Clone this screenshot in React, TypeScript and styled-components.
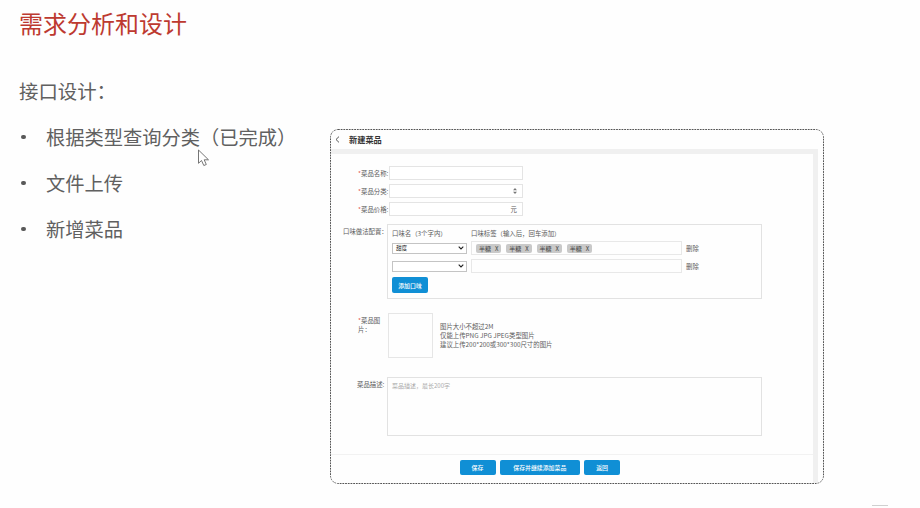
import React from 'react';
import styled, { createGlobalStyle } from 'styled-components';

const GlobalStyle = createGlobalStyle`
  * { box-sizing: border-box; }
  body {
    margin: 0;
    background: #fefefe;
    font-family: "Noto Sans CJK SC", sans-serif;
    overflow: hidden;
  }
`;

const Slide = styled.div`
  position: relative;
  display: flex;
  width: 920px;
  height: 508px;
  overflow: hidden;
`;

const Outline = styled.section`
  width: 330px;
  flex: none;
  padding: 5px 0 0 19px;
  color: #606060;
  white-space: nowrap;
`;

const Title = styled.h1`
  margin: 0;
  font-size: 24px;
  line-height: 36px;
  font-weight: 400;
  color: #bd3a30;
`;

const Lead = styled.p`
  margin: 27px 0 0;
  font-size: 19.4px;
  line-height: 46px;
`;

const Topics = styled.ul`
  margin: 0;
  padding: 0;
  list-style: none;
`;

const Topic = styled.li`
  display: flex;
  align-items: center;
  gap: 20.5px;
  font-size: 19.25px;
  line-height: 46px;
  &::before {
    content: "";
    width: 4.5px;
    height: 4.5px;
    margin-left: 2px;
    border-radius: 50%;
    background: #595959;
  }
`;

const Panel = styled.section`
  position: relative;
  display: flex;
  flex-direction: column;
  width: 494px;
  height: 355px;
  margin-top: 129px;
  padding: 1px;
  border-radius: 8px;
  font-size: 6.4px;
  line-height: 9px;
  color: #5c5c5c;
  white-space: nowrap;
  overflow: hidden;
`;

const DashedOutline = styled.svg`
  position: absolute;
  inset: 0;
  pointer-events: none;
`;

const PanelHeader = styled.header`
  display: flex;
  align-items: center;
  gap: 9px;
  height: 19px;
  padding-left: 4px;
  font-size: 8.2px;
  font-weight: 700;
  color: #333;
`;

const Content = styled.div`
  flex: 1;
  width: 487px;
  border-top: 5px solid #f0f0f0;
  border-right: 5px solid #f0f0f0;
`;

const Form = styled.form`
  height: 301px;
  padding-top: 12px;
  border-bottom: 1px solid #f2f2f2;
`;

const Field = styled.div<{ $top?: number }>`
  display: flex;
  align-items: flex-start;
  margin-top: ${p => p.$top ?? 4}px;
`;

const Label = styled.label<{ $width: number; $indent: number; $top?: number }>`
  width: ${p => p.$width}px;
  flex: none;
  padding: ${p => p.$top ?? 3}px 0 0 ${p => p.$indent}px;
`;

const Star = styled.span`
  color: #e2574c;
`;

const Control = styled.div`
  display: flex;
  align-items: center;
  justify-content: flex-end;
  width: 134px;
  height: 14px;
  padding-right: 5px;
  border: 1px solid #e4e4e4;
  background: #fff;
`;

const FlavourBox = styled.div`
  width: 375px;
  height: 75px;
  padding: 4px 0 0 4px;
  border: 1px solid #e2e2e2;
`;

const FlavourRow = styled.div<{ $height: number }>`
  display: grid;
  grid-template-columns: 75px 211px 30px;
  column-gap: 4px;
  align-items: center;
  height: ${p => p.$height}px;
`;

const Select = styled.div`
  display: flex;
  align-items: center;
  justify-content: space-between;
  height: 11px;
  padding: 0 2px 0 3px;
  border: 1px solid #c4c4c4;
  font-size: 5.6px;
  color: #222;
  background: #fff;
`;

const TagInput = styled.div`
  display: flex;
  align-items: center;
  gap: 5px;
  height: 14px;
  padding-left: 4px;
  border: 1px solid #e8e8e8;
`;

const Tag = styled.span`
  display: flex;
  align-items: center;
  justify-content: center;
  gap: 4px;
  width: 25.3px;
  height: 9px;
  border-radius: 2px;
  background: #c9c9c9;
  font-size: 6px;
  color: #444;
`;

const Button = styled.button<{ $width: number }>`
  display: block;
  width: ${p => p.$width}px;
  height: 15.5px;
  padding: 0;
  border: 0;
  border-radius: 2px;
  background: #108fd5;
  color: #fff;
  font: 500 5.9px/15px "Noto Sans CJK SC", sans-serif;
`;

const AddFlavour = styled(Button)`
  margin-top: 3.4px;
`;

const Upload = styled.div`
  width: 45px;
  height: 45px;
  margin-left: 1px;
  border: 1px solid #e6e6e6;
`;

const Hints = styled.p`
  margin: 10px 0 0 7px;
  line-height: 8.9px;
`;

const Textarea = styled.div`
  width: 375px;
  height: 59px;
  padding: 3px 4px;
  border: 1px solid #e2e2e2;
  font-size: 6px;
  color: #aaa;
`;

const Footer = styled.footer`
  display: flex;
  gap: 4.3px;
  padding: 4.5px 0 0 128.5px;
`;

const Pointer = styled.svg`
  position: absolute;
  left: 197px;
  top: 149px;
`;

const CornerMark = styled.div`
  position: absolute;
  left: 872px;
  top: 505px;
  width: 16px;
  height: 1px;
  background: #d0d0d0;
`;

const Chevron = () => (
  <svg width="6" height="4" viewBox="0 0 6 4" fill="none" stroke="#222" strokeWidth="1.1">
    <path d="M.7.6 3 3 5.3.6" />
  </svg>
);

const topics = ['根据类型查询分类（已完成）', '文件上传', '新增菜品'];
const fields = [
  { label: '菜品名称:', suffix: null },
  {
    label: '菜品分类:',
    suffix: (
      <svg width="4" height="6" viewBox="0 0 4 6" fill="#777">
        <path d="M2 0 4 2.3H0zM2 6 4 3.7H0z" />
      </svg>
    ),
  },
  { label: '菜品价格:', suffix: '元' },
];
const flavours = [
  { name: '甜度', tags: ['半糖', '半糖', '半糖', '半糖'] },
  { name: '', tags: [] as string[] },
];

export default function App() {
  return (
    <>
      <GlobalStyle />
      <Slide>
        <Outline>
          <Title>需求分析和设计</Title>
          <Lead>接口设计：</Lead>
          <Topics>
            {topics.map(t => <Topic key={t}>{t}</Topic>)}
          </Topics>
        </Outline>
        <Panel>
          <PanelHeader>
            <svg width="5" height="7" viewBox="0 0 5 7" fill="none" stroke="#444" strokeWidth=".9">
              <path d="M4 .6 1 3.5l3 2.9" />
            </svg>
            新建菜品
          </PanelHeader>
          <Content>
            <Form>
              {fields.map((f, i) => (
                <Field key={f.label} $top={i ? 4 : 0}>
                  <Label $width={58} $indent={27}><Star>*</Star>{f.label}</Label>
                  <Control>{f.suffix}</Control>
                </Field>
              ))}
              <Field $top={8}>
                <Label $width={56} $indent={12}>口味做法配置：</Label>
                <FlavourBox>
                  <FlavourRow $height={9}>
                    <span>口味名（3个字内）</span>
                    <span>口味标签（输入后，回车添加）</span>
                  </FlavourRow>
                  {flavours.map((f, i) => (
                    <FlavourRow key={i} $height={i ? 16 : 20}>
                      <Select>{f.name || <span />}<Chevron /></Select>
                      <TagInput>
                        {f.tags.map((t, n) => <Tag key={n}>{t}<span>X</span></Tag>)}
                      </TagInput>
                      <span>删除</span>
                    </FlavourRow>
                  ))}
                  <AddFlavour type="button" $width={36}>添加口味</AddFlavour>
                </FlavourBox>
              </Field>
              <Field $top={14}>
                <Label $width={56} $indent={27}><Star>*</Star>菜品图<br />片：</Label>
                <Upload />
                <Hints>
                  图片大小不超过2M<br />
                  仅能上传PNG JPG JPEG类型图片<br />
                  建议上传200*200或300*300尺寸的图片
                </Hints>
              </Field>
              <Field $top={19}>
                <Label $width={56} $indent={26}>菜品描述:</Label>
                <Textarea>菜品描述，最长200字</Textarea>
              </Field>
            </Form>
            <Footer>
              <Button $width={36}>保存</Button>
              <Button $width={80}>保存并继续添加菜品</Button>
              <Button $width={36}>返回</Button>
            </Footer>
          </Content>
          <DashedOutline width="494" height="355" fill="none" stroke="#555">
            <rect x=".5" y=".5" width="493" height="354" rx="7.5" strokeDasharray="1.8 .9" />
          </DashedOutline>
        </Panel>
        <Pointer width="13" height="18" viewBox="0 0 13 18" fill="#fff" stroke="#666" strokeWidth=".9">
          <path d="M1.5 1v13.3l3-2.8 2.3 5 2.5-1-2.1-4.7h4.3z" />
        </Pointer>
        <CornerMark />
      </Slide>
    </>
  );
}
